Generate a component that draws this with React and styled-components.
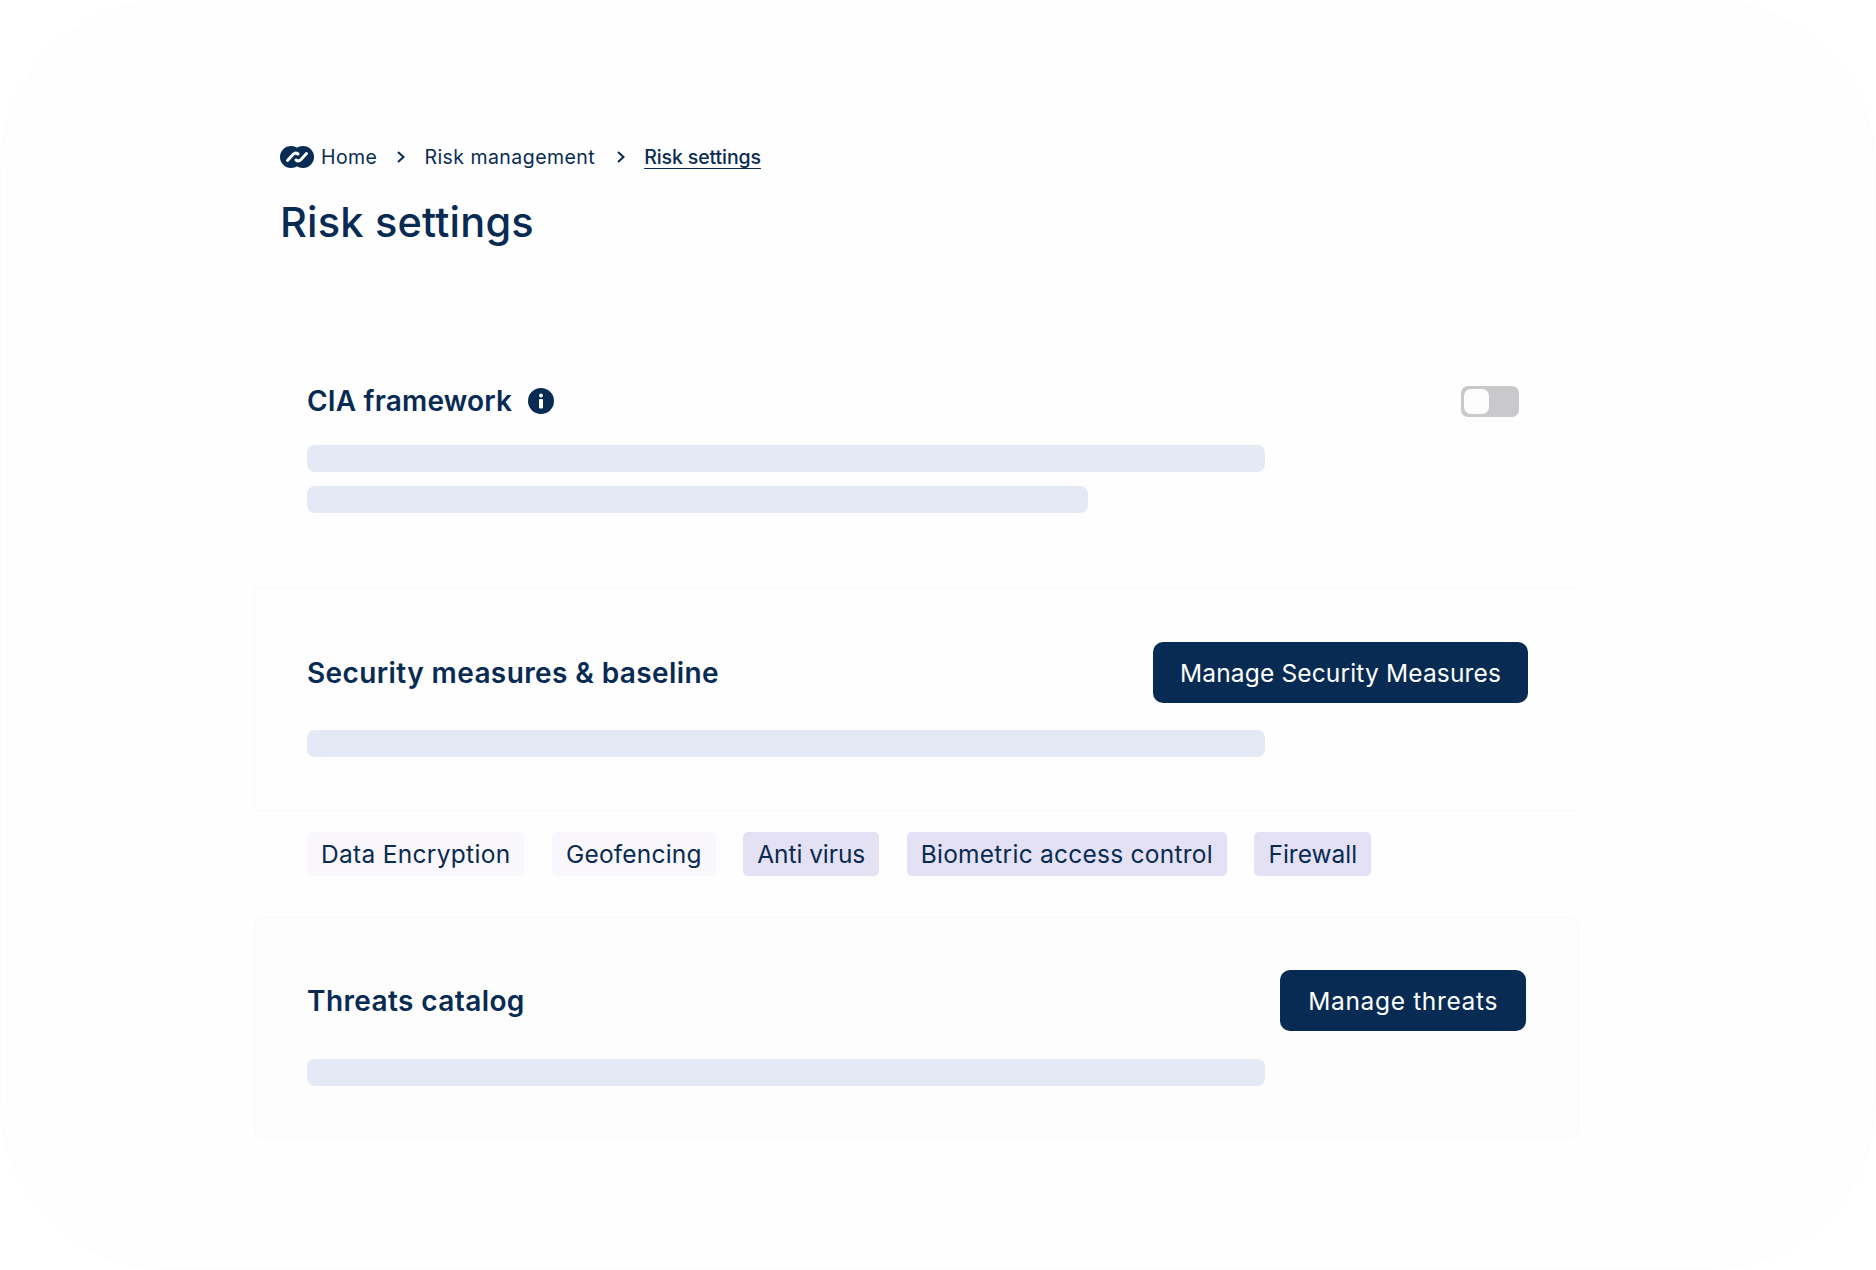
import React from 'react';
import styled, { createGlobalStyle } from 'styled-components';

const GlobalStyle = createGlobalStyle`
  html, body {
    margin: 0;
    padding: 0;
    background: #ffffff;
  }
`;

const Stage = styled.div`
  box-sizing: border-box;
  width: 1876px;
  height: 1270px;
  padding: 115px 297px 0 254px;
  background: #fefefe;
  border-radius: 170px;
  box-shadow: inset 0 0 0 1px #fbfbfb;
  font-family: Inter, "Open Sans", sans-serif;
  color: #072b52;
  overflow: hidden;
`;

const HeaderPanel = styled.header`
  box-sizing: border-box;
  height: 170px;
  padding: 30px 26px 0;
  margin-bottom: 35px;
  background: #fefefe;
`;

const Crumbs = styled.nav`
  display: flex;
  align-items: center;
  height: 24px;
  font-size: 19.5px;
  margin-bottom: 28px;
`;

const Crumb = styled.span`
  margin-left: ${p => p.$first ? '7px' : '0'};
  letter-spacing: ${p => p.$current ? '-0.1px' : '0.45px'};
  text-decoration: ${p => p.$current ? 'underline' : 'none'};
  text-underline-offset: 4px;
  font-weight: ${p => p.$current ? 500 : 400};
`;

const Chevron = styled.svg`
  width: 10px;
  height: 14px;
  margin: 0 ${p => p.$right}px 0 ${p => p.$left}px;
  fill: none;
  stroke: #072b52;
  stroke-width: 2;
`;

const Title = styled.h1`
  margin: 0;
  font-size: 41.5px;
  line-height: 50px;
  font-weight: 500;
  letter-spacing: 0.2px;
`;

const Panel = styled.section`
  box-sizing: border-box;
  height: ${p => p.$height}px;
  padding: ${p => p.$top}px 50px 0 53px;
  background: ${p => p.$outlined ? '#fdfdfd' : '#fefefe'};
  box-shadow: ${p => p.$outlined ? 'inset 0 0 0 1px #f8f8f8' : p.$lined ? 'inset 1px 1px 0 #f8f8f8' : 'none'};
  border-radius: ${p => p.$outlined ? '10px' : '0'};
`;

const PanelHead = styled.div`
  display: flex;
  align-items: center;
  justify-content: space-between;
  height: ${p => p.$height}px;
  padding-right: ${p => p.$inset}px;
  margin-bottom: ${p => p.$gap}px;
`;

const Heading = styled.div`
  display: flex;
  align-items: center;
  gap: 16px;
`;

const PanelTitle = styled.h2`
  margin: 0;
  font-size: 28px;
  font-weight: 600;
  letter-spacing: ${p => p.$tracking ?? 0.4}px;
`;

const Toggle = styled.div`
  box-sizing: border-box;
  width: 58px;
  height: 31px;
  padding: 3px;
  background: #c9c9cb;
  border-radius: 7px;
`;

const Knob = styled.div`
  width: 25px;
  height: 25px;
  background: #fdfdfd;
  border-radius: 7px;
`;

const Bar = styled.div`
  width: ${p => p.$width}px;
  height: 27px;
  margin-bottom: 14px;
  background: #e3e9f5;
  border-radius: 8px;
`;

const Button = styled.button`
  height: 61px;
  padding: 0 ${p => p.$pad}px;
  background: #072b52;
  color: #ffffff;
  border: none;
  border-radius: 10px;
  font-family: inherit;
  font-size: 24.5px;
  letter-spacing: ${p => p.$tracking}px;
`;

const TagRow = styled.div`
  box-sizing: border-box;
  height: 107px;
  display: flex;
  gap: 27.5px;
  padding: 22px 53px 0;
  background: #fefefe;
  box-shadow: inset 0 1px 0 #f8f8f8;
`;

const Tag = styled.span`
  height: 44px;
  display: flex;
  align-items: center;
  padding: 0 14px;
  font-size: 24.5px;
  letter-spacing: ${p => p.$tracking}px;
  border-radius: 5px;
  background: ${p => p.$active ? '#e5e1f4' : '#f9f7fb'};
`;

function Logo() {
  return (
    <svg width="34" height="22" viewBox="0 0 34 22">
      <circle cx="11" cy="11" r="11" fill="#072b52" />
      <circle cx="23" cy="11" r="11" fill="#072b52" />
      <path d="M7.5 14.5 L13 8.5 Q15.5 6 18 8" fill="none" stroke="#fdfdfd" strokeWidth="3" strokeLinecap="round" />
      <path d="M16 14 Q18.5 16 21 13.5 L26.5 7.5" fill="none" stroke="#fdfdfd" strokeWidth="3" strokeLinecap="round" />
    </svg>
  );
}

function InfoIcon() {
  return (
    <svg width="26" height="26" viewBox="0 0 26 26">
      <circle cx="13" cy="13" r="13" fill="#072b52" />
      <circle cx="13" cy="7.5" r="2" fill="#fff" />
      <rect x="11" y="11" width="4" height="9.5" rx="1" fill="#fff" />
    </svg>
  );
}

function ChevronIcon({ left, right }) {
  return (
    <Chevron $left={left} $right={right} viewBox="0 0 10 14">
      <path d="M2 2 L7.5 7 L2 12" />
    </Chevron>
  );
}

const tags = [
  { label: 'Data Encryption', tracking: 0.3 },
  { label: 'Geofencing', tracking: 0.2 },
  { label: 'Anti virus', tracking: -0.06, active: true },
  { label: 'Biometric access control', tracking: 0.25, active: true },
  { label: 'Firewall', tracking: 0, active: true },
];

export default function App() {
  return (
    <Stage>
      <GlobalStyle />
      <HeaderPanel>
        <Crumbs>
          <Logo />
          <Crumb $first>Home</Crumb>
          <ChevronIcon left={19} right={18} />
          <Crumb>Risk management</Crumb>
          <ChevronIcon left={21} right={18} />
          <Crumb $current>Risk settings</Crumb>
        </Crumbs>
        <Title>Risk settings</Title>
      </HeaderPanel>

      <Panel $height={268} $top={62}>
        <PanelHead $height={38} $inset={10} $gap={25}>
          <Heading>
            <PanelTitle $tracking={0.2}>CIA framework</PanelTitle>
            <InfoIcon />
          </Heading>
          <Toggle><Knob /></Toggle>
        </PanelHead>
        <Bar $width={958} />
        <Bar $width={781} />
      </Panel>

      <Panel $height={222} $top={54} $lined>
        <PanelHead $height={61} $inset={1} $gap={27}>
          <PanelTitle>Security measures &amp; baseline</PanelTitle>
          <Button $pad={27} $tracking={0.15}>Manage Security Measures</Button>
        </PanelHead>
        <Bar $width={958} />
      </Panel>

      <TagRow>
        {tags.map(tag => (
          <Tag key={tag.label} $active={tag.active} $tracking={tag.tracking}>{tag.label}</Tag>
        ))}
      </TagRow>

      <Panel $height={221} $top={53} $outlined>
        <PanelHead $height={61} $inset={3} $gap={28}>
          <PanelTitle>Threats catalog</PanelTitle>
          <Button $pad={28} $tracking={0.65}>Manage threats</Button>
        </PanelHead>
        <Bar $width={958} />
      </Panel>
    </Stage>
  );
}
